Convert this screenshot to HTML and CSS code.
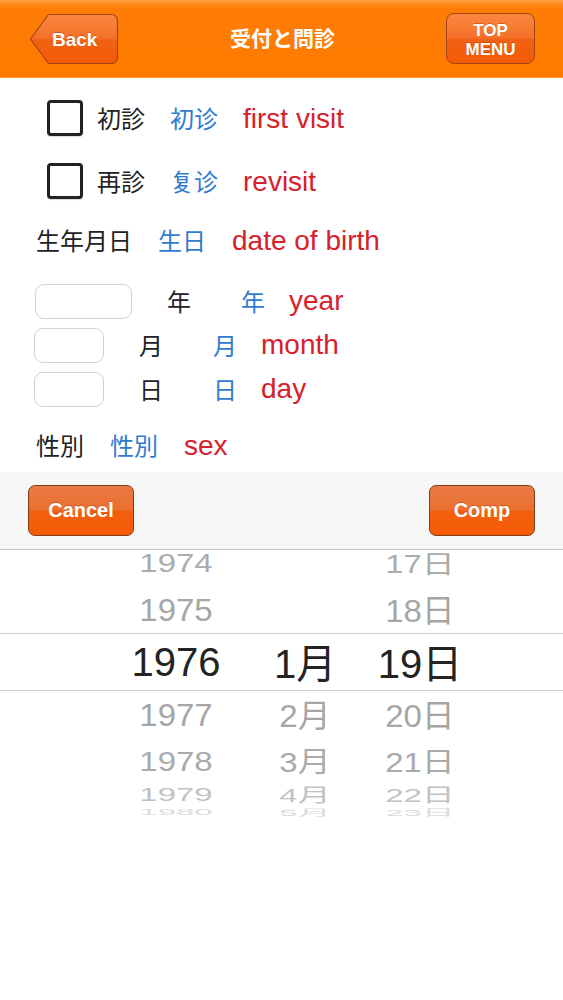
FILE: index.html
```html
<!DOCTYPE html>
<html lang="ja">
<head>
<meta charset="utf-8">
<title>受付と問診</title>
<link rel="stylesheet" href="styles.css">
</head>
<body>
<div class="app">
  <header class="navbar">
    <button class="back-btn">
      <svg class="back-shape" width="90" height="52" viewBox="0 0 90 52">
        <defs>
          <linearGradient id="bg1" x1="0" y1="0" x2="0" y2="1">
            <stop offset="0" stop-color="#f9873f"/>
            <stop offset="0.48" stop-color="#f5712a"/>
            <stop offset="0.52" stop-color="#f26214"/>
            <stop offset="1" stop-color="#f35a05"/>
          </linearGradient>
        </defs>
        <path d="M19.5 1.5 H82 Q88.5 1.5 88.5 8 V44 Q88.5 50.5 82 50.5 H19.5 L1.5 26 Z" fill="url(#bg1)" stroke="#a24512" stroke-width="1.2" stroke-linejoin="round"/>
      </svg>
      <span class="back-label">Back</span>
    </button>
    <h1 class="nav-title">受付と問診</h1>
    <button class="top-btn">TOP<br>MENU</button>
  </header>

  <main class="form">
    <div class="check-row">
      <span class="checkbox"></span>
      <div class="texts">
        <span class="jp">初診</span>
        <span class="cn">初诊</span>
        <span class="en">first visit</span>
      </div>
    </div>
    <div class="check-row row2">
      <span class="checkbox"></span>
      <div class="texts">
        <span class="jp">再診</span>
        <span class="cn">复诊</span>
        <span class="en">revisit</span>
      </div>
    </div>
    <div class="label-row dob">
      <span class="jp">生年月日</span>
      <span class="cn">生日</span>
      <span class="en">date of birth</span>
    </div>

    <div class="date-row year">
      <span class="field field-wide"></span>
      <span class="jp unit">年</span>
      <span class="cn unit2">年</span>
      <span class="en">year</span>
    </div>
    <div class="date-row month">
      <span class="field"></span>
      <span class="jp unit">月</span>
      <span class="cn unit2">月</span>
      <span class="en">month</span>
    </div>
    <div class="date-row day">
      <span class="field"></span>
      <span class="jp unit">日</span>
      <span class="cn unit2">日</span>
      <span class="en">day</span>
    </div>

    <div class="label-row sex">
      <span class="jp">性別</span>
      <span class="cn">性別</span>
      <span class="en">sex</span>
    </div>
  </main>

  <div class="toolbar">
    <button class="tool-btn">Cancel</button>
    <button class="tool-btn">Comp</button>
  </div>

  <div class="picker">
    <div class="prow r1">
      <span class="c y"><span class="t">1974</span></span>
      <span class="c m"></span>
      <span class="c d"><span class="t">17<span class="k">日</span></span></span>
    </div>
    <div class="prow r2">
      <span class="c y"><span class="t">1975</span></span>
      <span class="c m"></span>
      <span class="c d"><span class="t">18<span class="k">日</span></span></span>
    </div>
    <div class="prow sel">
      <span class="c y"><span class="t">1976</span></span>
      <span class="c m"><span class="t">1<span class="k">月</span></span></span>
      <span class="c d"><span class="t">19<span class="k">日</span></span></span>
    </div>
    <div class="prow r4">
      <span class="c y"><span class="t">1977</span></span>
      <span class="c m"><span class="t">2<span class="k">月</span></span></span>
      <span class="c d"><span class="t">20<span class="k">日</span></span></span>
    </div>
    <div class="prow r5">
      <span class="c y"><span class="t">1978</span></span>
      <span class="c m"><span class="t">3<span class="k">月</span></span></span>
      <span class="c d"><span class="t">21<span class="k">日</span></span></span>
    </div>
    <div class="prow r6">
      <span class="c y"><span class="t">1979</span></span>
      <span class="c m"><span class="t">4<span class="k">月</span></span></span>
      <span class="c d"><span class="t">22<span class="k">日</span></span></span>
    </div>
    <div class="prow r7">
      <span class="c y"><span class="t">1980</span></span>
      <span class="c m"><span class="t">5<span class="k">月</span></span></span>
      <span class="c d"><span class="t">23<span class="k">日</span></span></span>
    </div>
  </div>
</div>
</body>
</html>
```

FILE: styles.css
```css
* { box-sizing: border-box; }

html, body {
  margin: 0;
  padding: 0;
  background: #ffffff;
}

body {
  font-family: "Liberation Sans", "Noto Sans CJK JP", sans-serif;
  color: #222222;
}

.app {
  width: 563px;
  min-height: 1000px;
  background: #ffffff;
}

/* ---------- navbar ---------- */
.navbar {
  height: 78px;
  display: flex;
  align-items: center;
  justify-content: space-between;
  padding: 0 28px 0 29px;
  background: linear-gradient(#ffa24a 0px, #ff8a1c 4px, #ff7d06 9px, #ff7a00 100%);
  border-bottom: 1px solid #ff9a40;
}

.back-btn {
  display: grid;
  width: 90px;
  height: 52px;
  padding: 0;
  margin: 0;
  border: 0;
  background: transparent;
}

.back-shape {
  grid-area: 1 / 1;
  display: block;
}

.back-label {
  grid-area: 1 / 1;
  align-self: center;
  justify-self: start;
  padding-left: 23px;
  padding-top: 3px;
  font-family: "Liberation Sans", sans-serif;
  font-weight: bold;
  font-size: 19px;
  color: #ffffff;
  text-shadow: 0 -1px 0 rgba(120, 40, 0, 0.35);
}

.nav-title {
  margin: 0;
  font-family: "Noto Sans CJK JP", sans-serif;
  font-weight: bold;
  font-size: 21px;
  color: #ffffff;
  line-height: 1;
  padding-bottom: 3px;
}

.top-btn {
  width: 89px;
  height: 51px;
  margin: 0;
  padding: 2px 0 0;
  border: 1px solid #a24512;
  border-radius: 8px;
  background: linear-gradient(#f9873f 0%, #f5712a 48%, #f26214 52%, #f35a05 100%);
  font-family: "Liberation Sans", sans-serif;
  font-weight: bold;
  font-size: 17px;
  line-height: 19px;
  color: #ffffff;
  text-shadow: 0 -1px 0 rgba(120, 40, 0, 0.35);
}

/* ---------- form ---------- */
.form {
  height: 394px;
  padding-top: 22px;
  display: flex;
  flex-direction: column;
}

.jp, .cn {
  font-family: "Noto Sans CJK JP", sans-serif;
  font-size: 24px;
  line-height: 30px;
}

.jp { color: #222222; }
.cn { color: #2f7bd0; }

.en {
  font-family: "Liberation Sans", sans-serif;
  font-size: 28px;
  line-height: 30px;
  color: #d6212a;
}

.check-row {
  display: flex;
  align-items: center;
  padding-left: 47px;
  height: 36px;
}

.row2 { margin-top: 27px; }

.checkbox {
  width: 36px;
  height: 36px;
  border: 3px solid #222222;
  border-radius: 4px;
  background: #ffffff;
  box-shadow: 0 1px 1px rgba(0, 0, 0, 0.15);
}

.texts {
  display: flex;
  align-items: baseline;
  gap: 25px;
  margin-left: 14px;
}

.label-row {
  display: flex;
  align-items: baseline;
  gap: 26px;
  padding-left: 36px;
}

.dob { margin-top: 26px; }
.sex { margin-top: 24px; }

.date-row {
  display: flex;
  align-items: center;
  padding-left: 34px;
  height: 34px;
}

.year { margin-top: 28px; padding-left: 35px; }
.month, .day { margin-top: 10px; }

.field {
  width: 70px;
  height: 35px;
  border: 1px solid #d2d2d2;
  border-radius: 9px;
  background: #ffffff;
}

.field-wide { width: 97px; }

.unit { margin-left: 35px; }
.unit2 { margin-left: 50px; margin-right: 24px; }

/* ---------- toolbar ---------- */
.toolbar {
  height: 78px;
  display: flex;
  align-items: center;
  justify-content: space-between;
  padding: 0 28px 1px 28px;
  background: #f7f7f7;
  border-bottom: 1px solid #c4c4c4;
}

.tool-btn {
  width: 106px;
  height: 51px;
  margin: 0;
  padding: 1px 0 0;
  border: 1px solid #7e3f1d;
  border-radius: 7px;
  background: linear-gradient(#e97a44 0%, #ec6f30 48%, #f1600f 52%, #f75a03 100%);
  font-family: "Liberation Sans", sans-serif;
  font-weight: bold;
  font-size: 20px;
  color: #ffffff;
  text-shadow: 0 -1px 0 rgba(110, 40, 0, 0.3);
}

/* ---------- picker ---------- */
.picker {
  display: flex;
  flex-direction: column;
  background: #ffffff;
}

.prow {
  display: grid;
  grid-template-columns: 160px 98px 132px;
  grid-template-rows: minmax(0, 1fr);
  padding-left: 96px;
  align-items: center;
  font-size: 33px;
  color: #a6a6a6;
}

.c {
  display: flex;
  justify-content: center;
  align-items: center;
  min-height: 0;
}

.t {
  display: inline-block;
  line-height: 1;
  white-space: nowrap;
}

.k {
  font-family: "Noto Sans CJK JP", sans-serif;
}

.r1 { height: 36px; padding-bottom: 10px; }
.r1 .t { transform: scaleY(0.76); color: #acacac; }

.r2 { height: 47px; }
.r2 .t { transform: scaleY(0.96); }

.sel {
  height: 58px;
  border-top: 1px solid #cfcfcf;
  border-bottom: 1px solid #cfcfcf;
  font-size: 40px;
  color: #232323;
}

.r4 { height: 47px; }
.r4 .t { transform: scaleY(0.97); }

.r5 { height: 44px; padding-top: 2px; }
.r5 .t { transform: scaleY(0.85); color: #aaaaaa; }

.r6 { height: 24px; }
.r6 .t { transform: scaleY(0.58); color: #c2c2c2; }

.r7 { height: 12px; }
.r7 .t { transform: scaleY(0.26); color: #dcdcdc; }
```
